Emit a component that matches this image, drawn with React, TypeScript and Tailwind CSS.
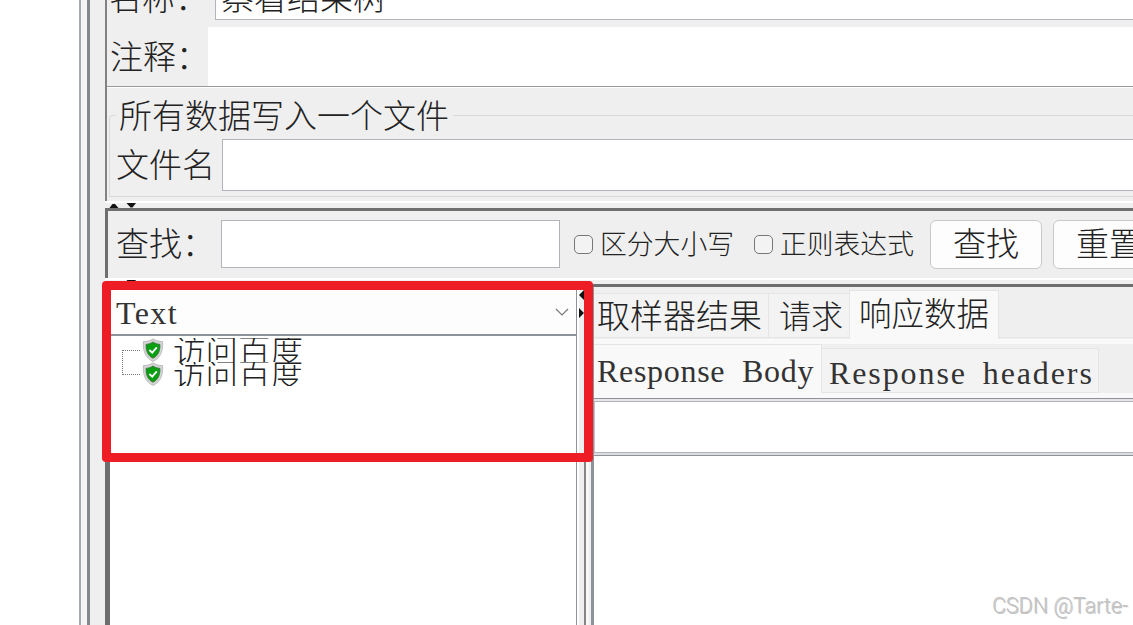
import clsx from "clsx";

type TextProps = {
	children: string;
	className?: string;
};

const Label = ({ children, className }: TextProps) => (
	<span className={clsx("shrink-0 whitespace-pre leading-[40px]", className)}>{children}</span>
);

const Latin = ({ children, className }: TextProps) => (
	<span
		className={clsx(
			"whitespace-pre font-['Liberation_Serif',serif] text-[32px] leading-[40px] text-[#333]",
			className
		)}
	>
		{children}
	</span>
);

const CheckOption = ({ children, className }: TextProps) => (
	<label className={clsx("flex shrink-0 items-center", className)}>
		<span className="mr-[7px] size-[19px] rounded-[5px] border-[1.5px] border-[#777] bg-[#f3f3f3]" />
		<span className="-mt-[3px] whitespace-nowrap text-[26.8px] leading-[34px]">{children}</span>
	</label>
);

const SplitArrows = () => (
	<svg className="ml-[4px] block" width="30" height="5" viewBox="0 0 30 5">
		<path d="M0.5 5 L3.5 1 H6 L9.5 5 Z" fill="#111" />
		<path d="M17.5 0 H27 L23.5 4.5 H21.5 Z" fill="#111" />
	</svg>
);

const Shield = () => (
	<svg width="22" height="24" viewBox="0 0 22 24" className="shrink-0">
		<path
			d="M11 .8 C8.4 2.7 5 3.6 1.4 3.6 C.8 12.2 3.1 20 11 23.4 C18.9 20 21.2 12.2 20.6 3.6 C17 3.6 13.6 2.7 11 .8 Z"
			fill="#d4d4d4"
			stroke="#b2b2b2"
			strokeWidth=".8"
		/>
		<path
			d="M11 4 C8.9 5.5 6.6 6.2 4.1 6.4 C3.9 12.5 5.5 17.4 11 20.2 C16.5 17.4 18.1 12.5 17.9 6.4 C15.4 6.2 13.1 5.5 11 4 Z"
			fill="#08a010"
			stroke="#3c7040"
			strokeWidth=".9"
		/>
		<path d="M7.4 12 L10.2 14.6 L14.8 9.4" fill="none" stroke="#fff" strokeWidth="1.8" />
	</svg>
);

const results = ["访问百度", "访问百度"];

const TopPanel = () => (
	<section className="h-[201px] border-l-2 border-[#828282]">
		<div className="flex h-[27px] items-end overflow-hidden pl-[2px]">
			<Label className="mb-[11px] w-[106px]">名称：</Label>
			<div className="mb-[7px] flex h-[50px] flex-1 items-end border border-r-0 border-[#b2b3bb] bg-white pl-[5px]">
				<Label className="mb-[3px]">察看结果树</Label>
			</div>
		</div>
		<div className="flex h-[59px] items-center pl-[3px]">
			<Label className="-mt-[3px] w-[98px]">注释：</Label>
			<div className="h-full flex-1 bg-white" />
		</div>
		<div className="h-[2px] border-b border-t border-b-white border-t-[#999]" />
		<div className="flex h-[109px] flex-col pl-[2px]">
			<div className="flex h-[51px] items-center">
				<div className="mt-[27px] h-[24px] w-[7px] rounded-tl-sm border-l border-t border-[#dadada]" />
				<Label className="ml-[3px] mt-px">所有数据写入一个文件</Label>
				<div className="ml-[4px] mt-[4px] h-px flex-1 bg-[#dadada]" />
			</div>
			<div className="flex flex-1 items-start border-b border-l border-[#dadada] pl-[6px]">
				<Label className="mt-[4px] w-[106px]">文件名</Label>
				<div className="h-[52px] flex-1 border-y-[1.5px] border-l-[1.5px] border-[#b2b3bb] bg-white" />
			</div>
		</div>
	</section>
);

const SearchBar = () => (
	<section className="flex h-[67px] items-center border-l-[3px] border-[#6e6e6e] pl-[8px]">
		<Label className="-mt-[5px] w-[105px]">查找：</Label>
		<div className="-mt-[2px] h-[48px] w-[339px] shrink-0 border-[1.5px] border-[#b2b3bb] bg-white" />
		<CheckOption className="ml-[14px]">区分大小写</CheckOption>
		<CheckOption className="ml-[20px]">正则表达式</CheckOption>
		<button className="ml-[16px] flex h-[49px] w-[112px] shrink-0 justify-center rounded-md border border-[#c9c9c9] bg-[#fdfdfd]">
			<Label className="mt-px">查找</Label>
		</button>
		<button className="ml-[11px] flex h-[49px] w-[112px] shrink-0 justify-center rounded-md border border-[#c9c9c9] bg-[#fdfdfd]">
			<Label className="mt-px">重置</Label>
		</button>
	</section>
);

const ResultTree = () => (
	<div className="flex w-[472px] shrink-0 flex-col border-l-[5px] border-r border-l-[#6e6e6e] border-r-[#8e929a] bg-white">
		<div className="flex h-[49px] items-center justify-between border-b-2 border-[#8e929a] bg-[#fdfdfd] pl-[6px] pr-[7px]">
			<Latin className="mt-[4px] tracking-[1.4px]">Text</Latin>
			<svg width="14" height="8" viewBox="0 0 14 8" className="mt-[2px]">
				<path d="M1 1 L7 7 L13 1" fill="none" stroke="#777" strokeWidth="1.2" />
			</svg>
		</div>
		<div className="flex pl-[12px] pt-[2px]">
			<div className="mt-[12px] h-[25px] w-[18px] border-y border-l border-dotted border-[#777]" />
			<ul>
				{results.map((name, i) => (
					<li key={i} className="flex h-[24px] items-center overflow-hidden pl-[2px]">
						<Shield />
						<Label className="-mt-[2px] ml-[9px] text-[32.5px]">{name}</Label>
					</li>
				))}
			</ul>
		</div>
	</div>
);

const ResponsePane = () => (
	<div className="flex min-w-0 flex-1 flex-col border-l-[3px] border-[#8e929a] bg-white">
		<div className="flex h-[57px] shrink-0 items-start border-b-[5px] border-[#f9f9f9] bg-[#efefef]">
			<div className="mt-[6px] flex h-[45px] w-[175px] items-center border border-l-0 border-[#e5e5e5] bg-[#f3f3f3] pl-[3px]">
				<Label className="-mt-[3px]">取样器结果</Label>
			</div>
			<div className="mt-[6px] flex h-[45px] w-[80px] items-center border-y border-[#e5e5e5] bg-[#f3f3f3] pl-[10px]">
				<Label className="-mt-[3px] text-[32px]">请求</Label>
			</div>
			<div className="mt-[3px] flex h-[49px] w-[150px] items-center border-x border-t border-[#e5e5e5] bg-[#f9f9f9] pl-[9px]">
				<Label className="-mt-[6px] text-[32.5px]">响应数据</Label>
			</div>
			<div className="h-[51px] flex-1 border-b border-[#e5e5e5]" />
		</div>
		<div className="flex h-[54px] shrink-0 items-start border-b-[5px] border-[#f9f9f9] bg-[#efefef]">
			<div className="flex h-full w-[228px] items-center border-r border-t border-[#e5e5e5] bg-[#f9f9f9] pl-[3px]">
				<Latin className="mt-[3px] tracking-[0.7px] [word-spacing:8px]">Response Body</Latin>
			</div>
			<div className="mt-[4px] flex h-[45px] w-[277px] items-center border border-l-0 border-[#e5e5e5] bg-[#f3f3f3] pl-[7px]">
				<Latin className="mt-[5px] tracking-[1.9px] [word-spacing:6px]">Response headers</Latin>
			</div>
		</div>
		<div className="h-[4px] shrink-0 border-b border-t border-b-[#b2b3bb] border-t-[#8e929a] bg-[#e6e6e8]" />
		<div className="h-[50px] shrink-0 border-l border-[#c4c4c8] bg-white" />
		<div className="h-[4px] shrink-0 border-b border-t border-b-[#8e929a] border-t-[#b2b3bb] bg-[#dddde0]" />
		<div className="flex-1 bg-white" />
	</div>
);

const App = () => {
	return (
		<div className="relative flex h-[625px] w-[1133px] overflow-hidden bg-white font-['Noto_Sans_CJK_SC',sans-serif] text-[33px] font-light text-[#222]">
			<div className="w-[79px] shrink-0" />
			<div className="w-[8px] shrink-0 border-l-2 border-[#a5a9b0] bg-[#f5f5f5]" />
			<div className="w-[18px] shrink-0 border-l-[3px] border-[#85888c] bg-[#efefef]" />

			<main className="flex min-w-0 flex-1 flex-col bg-[#efefef]">
				<TopPanel />
				<div className="h-[2px] shrink-0 bg-white" />
				<div className="h-[5px] shrink-0">
					<SplitArrows />
				</div>
				<div className="h-[3px] shrink-0 bg-[#6e6e6e]" />
				<SearchBar />
				<div className="h-[2px] shrink-0 bg-white" />
				<div className="h-[4px] shrink-0">
					<SplitArrows />
				</div>
				<div className="h-[3px] shrink-0 bg-[#6e6e6e]" />
				<section className="flex min-h-0 flex-1">
					<ResultTree />
					<div className="flex w-[14px] shrink-0 border-l-2 border-white">
						<svg width="5" height="32" viewBox="0 0 5 32">
							<path d="M5 3 V13 L0 8 Z M0 21 V31 L5 26 Z" fill="#111" />
						</svg>
						<div className="w-[2px] bg-[#858585]" />
						<div className="w-[3px] bg-[#f8f8f8]" />
					</div>
					<ResponsePane />
				</section>
			</main>

			{/* highlighted result area */}
			<div className="absolute left-[102px] top-[281px] h-[181px] w-[491px] rounded-[4px] border-[9px] border-[#ee1c25]" />
			<span className="absolute bottom-[6px] right-[5px] whitespace-nowrap font-['Roboto',sans-serif] text-[21.5px] font-light leading-[26px] text-[#c4c4c4] [text-shadow:1px_1px_0_#c4c4c4]">
				CSDN @Tarte-
			</span>
		</div>
	);
};

export default App;
